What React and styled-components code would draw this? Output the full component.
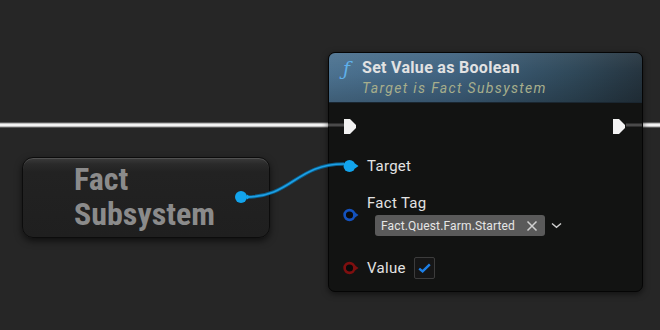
import React from 'react'
import styled, { createGlobalStyle } from 'styled-components'

const GlobalStyle = createGlobalStyle`
  html, body {
    margin: 0;
    padding: 0;
    background: #262626;
  }
  body {
    font-family: Roboto, "Liberation Sans", sans-serif;
  }
`

const Canvas = styled.div`
  position: relative;
  width: 660px;
  height: 330px;
  overflow: hidden;
  background: #262626;
`

const Wires = styled.svg`
  position: absolute;
  left: 0;
  top: 0;
  width: 660px;
  height: 330px;
  pointer-events: none;
`

const Node = styled.div`
  position: absolute;
  left: ${(p) => p.x}px;
  top: ${(p) => p.y}px;
  width: ${(p) => p.w}px;
`

const FunctionNode = styled(Node)`
  height: 240px;
  border-radius: 7px;
  background: #121312;
  border: 1px solid #050505;
  box-sizing: border-box;
  box-shadow: 0 2px 6px rgba(0, 0, 0, 0.55);
  display: flex;
  flex-direction: column;
  overflow: hidden;
`

const Header = styled.div`
  height: 50px;
  box-sizing: border-box;
  padding: 5px 0 0 14px;
  display: flex;
  gap: 9px;
  background: linear-gradient(180deg, rgba(255, 255, 255, 0.06) 0%, rgba(0, 0, 0, 0) 40%, rgba(0, 0, 0, 0.18) 100%),
    linear-gradient(90deg, #4c7290 0%, #406380 40%, #2f4859 78%, #25343f 100%);
  border-bottom: 1px solid #1a2630;
`

const FuncIcon = styled.span`
  font-family: "DejaVu Serif", "Liberation Serif", serif;
  font-style: italic;
  font-size: 19px;
  line-height: 19px;
  color: #5fb0ea;
  margin-top: 1px;
  width: 10px;
`

const Titles = styled.div`
  display: flex;
  flex-direction: column;
`

const Title = styled.div`
  font-family: Roboto, "Liberation Sans", sans-serif;
  font-weight: 700;
  font-size: 16px;
  letter-spacing: 0.3px;
  line-height: 20px;
  color: #e2e2e2;
`

const Subtitle = styled.div`
  font-family: Roboto, "Liberation Sans", sans-serif;
  font-style: italic;
  font-size: 14px;
  letter-spacing: 1.35px;
  line-height: 17px;
  margin-top: 2px;
  color: #a7ae8c;
`

const Body = styled.div`
  flex: 1;
  display: flex;
  flex-direction: column;
  padding: 13px 16px 0 14px;
`

const Row = styled.div`
  display: flex;
  align-items: center;
  justify-content: ${(p) => (p.spread ? 'space-between' : 'flex-start')};
  gap: 8px;
  height: 20px;
  margin-top: ${(p) => p.mt || 0}px;
`

const PinBlock = styled.div`
  display: flex;
  align-items: center;
  gap: 8px;
  margin-top: ${(p) => p.mt || 0}px;
`

const PinIcon = styled.svg`
  flex: 0 0 auto;
  display: block;
`

const Stack = styled.div`
  display: flex;
  flex-direction: column;
`

const Label = styled.span`
  font-family: Roboto, "Liberation Sans", sans-serif;
  font-size: 15px;
  letter-spacing: 0.3px;
  color: #e2e2e2;
  line-height: 20px;
`

const TagRow = styled.div`
  display: flex;
  align-items: center;
  gap: 6px;
  margin: 2px 0 0 8px;
`

const Chip = styled.div`
  display: flex;
  align-items: center;
  gap: 11px;
  height: 21px;
  padding: 0 7px 0 6px;
  border-radius: 3px;
  background: #5a5a5a;
  font-family: Roboto, "Liberation Sans", sans-serif;
  font-size: 12px;
  letter-spacing: 0.15px;
  color: #e6e6e6;
`

const Check = styled.div`
  width: 21px;
  height: 22px;
  box-sizing: border-box;
  border: 1px solid #3c3c3c;
  border-radius: 2px;
  background: #161616;
  display: flex;
  align-items: center;
  justify-content: center;
  margin-left: 0;
`

const CompactNode = styled(Node)`
  height: 81px;
  box-sizing: border-box;
  border-radius: 11px;
  border: 1px solid #0c0c0c;
  background: linear-gradient(180deg, #3b3b3b 0px, #2a2a2a 6px, #222 14px, #1f1f1f 100%);
  box-shadow: 0 3px 7px rgba(0, 0, 0, 0.6), inset 0 1px 0 rgba(255, 255, 255, 0.12);
  display: flex;
  align-items: center;
  padding-left: 51px;
`

const BigTitle = styled.div`
  font-family: "Liberation Sans Narrow", "Roboto Condensed", Roboto, sans-serif;
  font-weight: 700;
  font-size: 32px;
  line-height: 35px;
  color: #8b8b8b;
  margin-top: -2px;
`

const ExecPin = () => (
  <PinIcon width="14" height="17" viewBox="0 0 14 17">
    <path d="M1 1 H7 L13 7 V10 L7 16 H1 Z" fill="#f2f2f2" />
  </PinIcon>
)

const DataPin = ({ color, filled }) => (
  <PinIcon width="16" height="14" viewBox="0 0 16 14">
    {filled ? (
      <circle cx="6.5" cy="7" r="6" fill={color} />
    ) : (
      <circle cx="6.5" cy="7" r="4.9" fill="#0a0a0a" stroke={color} strokeWidth="2.6" />
    )}
    <path d="M12 4.4 L15.5 7 L12 9.6 Z" fill={color} />
  </PinIcon>
)

const CloseIcon = () => (
  <PinIcon width="12" height="12" viewBox="0 0 12 12">
    <path d="M1.5 1.5 L10.5 10.5 M10.5 1.5 L1.5 10.5" stroke="#d0d0d0" strokeWidth="1.5" />
  </PinIcon>
)

const Chevron = () => (
  <PinIcon width="11" height="7" viewBox="0 0 11 7">
    <path d="M1 1.5 L5.5 5.4 L10 1.5" stroke="#cfcfcf" strokeWidth="1.4" fill="none" />
  </PinIcon>
)

const CheckMark = () => (
  <PinIcon width="13" height="10" viewBox="0 0 13 10">
    <path d="M1.2 5.6 L4.6 8.4 L11.8 1.4" stroke="#1d7fe6" strokeWidth="2.4" fill="none" />
  </PinIcon>
)

export default function App() {
  return (
    <>
      <GlobalStyle />
      <Canvas>
        <Wires viewBox="0 0 660 330">
          <line x1="0" y1="125" x2="330" y2="125" stroke="#8a8a8a" strokeWidth="5" />
          <line x1="0" y1="125" x2="330" y2="125" stroke="#f4f4f4" strokeWidth="3" />
          <line x1="640" y1="125" x2="660" y2="125" stroke="#8a8a8a" strokeWidth="5" />
          <line x1="640" y1="125" x2="660" y2="125" stroke="#f4f4f4" strokeWidth="3" />
        </Wires>

        <CompactNode x={22} y={157} w={248}>
          <BigTitle>
            Fact
            <br />
            Subsystem
          </BigTitle>
        </CompactNode>

        <FunctionNode x={328} y={52} w={315}>
          <Header>
            <FuncIcon>ƒ</FuncIcon>
            <Titles>
              <Title>Set Value as Boolean</Title>
              <Subtitle>Target is Fact Subsystem</Subtitle>
            </Titles>
          </Header>
          <Body>
            <Row spread>
              <ExecPin />
              <ExecPin />
            </Row>
            <Row mt={20}>
              <DataPin color="#12a4ec" filled />
              <Label>Target</Label>
            </Row>
            <PinBlock mt={17}>
              <DataPin color="#1452bd" />
              <Stack>
                <Label>Fact Tag</Label>
                <TagRow>
                  <Chip>
                    Fact.Quest.Farm.Started
                    <CloseIcon />
                  </Chip>
                  <Chevron />
                </TagRow>
              </Stack>
            </PinBlock>
            <Row mt={22}>
              <DataPin color="#7e0f0f" />
              <Label>Value</Label>
              <Check>
                <CheckMark />
              </Check>
            </Row>
          </Body>
        </FunctionNode>

        <Wires viewBox="0 0 660 330">
          <line x1="328" y1="125" x2="344" y2="125" stroke="#4a4a4a" strokeWidth="3" />
          <line x1="626" y1="125" x2="642" y2="125" stroke="#4a4a4a" strokeWidth="3" />
          <path d="M246 197 C 292 197, 296 164, 344 164" stroke="#0b5f8c" strokeWidth="3.5" fill="none" />
          <path d="M246 197 C 292 197, 296 164, 344 164" stroke="#1da0e6" strokeWidth="1.6" fill="none" />
          <circle cx="241" cy="197" r="6" fill="#12a4ec" />
          <path d="M247 194.6 L250 197 L247 199.4 Z" fill="#12a4ec" />
        </Wires>
      </Canvas>
    </>
  )
}
